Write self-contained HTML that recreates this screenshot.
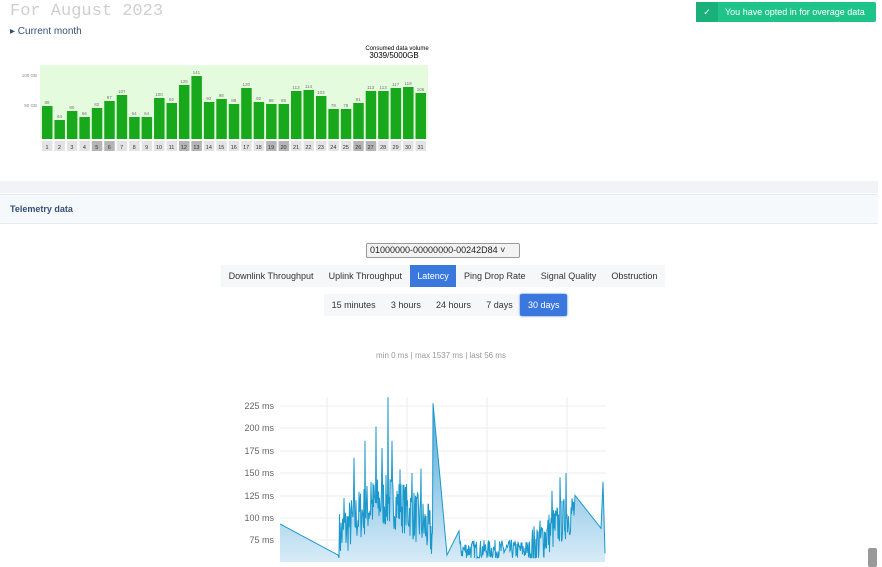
<!DOCTYPE html>
<html><head><meta charset="utf-8"><style>
body{margin:0;width:882px;height:567px;overflow:hidden;background:#fff;font-family:"Liberation Sans",sans-serif;position:relative}
.t{position:absolute;left:10px;top:2px;font-family:"Liberation Mono",monospace;font-size:17px;color:#cfcfcf}
.cm{position:absolute;left:10px;top:26px;font-size:10px;color:#35507a}
.toast{position:absolute;left:696px;top:2px;width:180px;height:20px;background:#1fc48a;border-radius:2px;color:#fff;font-size:9px;line-height:20px}
.toast .ic{position:absolute;left:0;top:0;width:22px;height:20px;background:#19b07b;text-align:center}
.toast span{position:absolute;left:29px}
.band{position:absolute;left:0;top:181px;width:878px;height:12px;background:#f1f3f6}
.hdr{position:absolute;left:0;top:194px;width:878px;height:28px;background:#f6f9fc;border-top:1px solid #e6e9ee;border-bottom:1px solid #e6e9ee;font-size:9px;font-weight:bold;color:#35507a;line-height:28px;text-indent:10px}
.sel{position:absolute;left:366px;top:243px;width:152px;height:13px;border:1px solid #999;background:#f3f3f3;font-size:9px;line-height:13px;text-indent:3px;color:#222;border-radius:2px}
.tabs{position:absolute;top:265px;height:22px;background:#f6f7f9;font-size:9px;color:#333;display:flex}
.tabs div{padding:0 7.6px;line-height:22px}
.tabs .a{background:#3b78dd;color:#fff}
.stat{position:absolute;left:0;width:882px;top:351px;text-align:center;font-size:8px;color:#999}
.sb{position:absolute;left:868px;top:548px;width:9px;height:19px;background:#999;border-radius:2px}
</style></head><body>
<div class="t">For August 2023</div>
<div class="cm">&#9656; Current month</div>
<div class="toast"><div class="ic">&#10003;</div><span>You have opted in for overage data</span></div>
<svg width="882" height="160" style="position:absolute;left:0;top:0" id="bars" font-family="Liberation Sans,sans-serif">
<text x="397" y="50" font-size="6" text-anchor="middle">Consumed data volume</text>
<text x="394" y="58" font-size="8" text-anchor="middle">3039/5000GB</text>
<rect x="40" y="65" width="388" height="74" fill="#e4fbde"/>
<text x="37" y="77" font-size="4.5" fill="#888" text-anchor="end">100 GB</text>
<text x="37" y="107" font-size="4.5" fill="#888" text-anchor="end">50 GB</text>
</svg>
<div class="band"></div>
<div class="hdr">Telemetry data</div>
<div class="sel">01000000-00000000-00242D84 &#709;</div>
<div class="tabs" style="left:221px"><div>Downlink Throughput</div><div>Uplink Throughput</div><div class="a">Latency</div><div>Ping Drop Rate</div><div>Signal Quality</div><div>Obstruction</div></div>
<div class="tabs" style="left:324px;top:294px;height:22px"><div>15 minutes</div><div>3 hours</div><div>24 hours</div><div>7 days</div><div class="a" style="border-radius:2px;box-shadow:0 0 2px #3b78dd">30 days</div></div>
<div class="stat">min 0 ms | max 1537 ms | last 56 ms</div>
<svg width="882" height="567" style="position:absolute;left:0;top:0" id="lc" font-family="Liberation Sans,sans-serif">
<defs><linearGradient id="g" x1="0" y1="0" x2="0" y2="1"><stop offset="0" stop-color="#4aa6d8"/><stop offset="1" stop-color="#d7ebf7"/></linearGradient></defs>
<g stroke="#eee" stroke-width="1"><line x1="327" y1="397" x2="327" y2="562"/><line x1="407" y1="397" x2="407" y2="562"/><line x1="487" y1="397" x2="487" y2="562"/><line x1="567" y1="397" x2="567" y2="562"/>
<line x1="280" y1="406" x2="606" y2="406"/><line x1="280" y1="428" x2="606" y2="428"/><line x1="280" y1="451" x2="606" y2="451"/><line x1="280" y1="473" x2="606" y2="473"/><line x1="280" y1="496" x2="606" y2="496"/><line x1="280" y1="518" x2="606" y2="518"/><line x1="280" y1="540" x2="606" y2="540"/></g>
<g font-size="9" fill="#666" text-anchor="end"><text x="274" y="409">225 ms</text><text x="274" y="431">200 ms</text><text x="274" y="454">175 ms</text><text x="274" y="476">150 ms</text><text x="274" y="499">125 ms</text><text x="274" y="521">100 ms</text><text x="274" y="543">75 ms</text></g>
<path id="ar" fill="url(#g)"/><path id="ln" fill="none" stroke="#1a98cc" stroke-width="1"/>
</svg>
<div class="sb"></div>
<script>
var v=[88,64,80,66,82,97,107,64,64,100,92,125,141,92,98,88,120,92,88,88,113,114,103,78,78,91,113,113,117,119,106];
var tops=[106,120,111,117,108,101,95,117,117,98,103,85,76,102,99,104,88,102,104,104,91,90,96,109,109,103,91,91,88,87,93];
var s='',b=139,sv=document.getElementById('bars');
var dark=[5,6,12,13,19,20,26,27];
for(var i=0;i<31;i++){var x=42+i*12.45,h=b-tops[i];
s+='<rect x="'+x+'" y="'+(b-h)+'" width="10.5" height="'+h+'" fill="#17a81b"/>';
s+='<text x="'+(x+5)+'" y="'+(b-h-2)+'" font-size="4.5" fill="#777" text-anchor="middle">'+v[i]+'</text>';
s+='<rect x="'+x+'" y="141" width="10.5" height="10" fill="'+(dark.indexOf(i+1)>=0?'#b5b5b5':'#e3e3e3')+'"/>';
s+='<text x="'+(x+5)+'" y="149" font-size="5.5" fill="#333" text-anchor="middle">'+(i+1)+'</text>';}
sv.insertAdjacentHTML('beforeend',s);
var seed=7;function r(){seed=(seed*16807)%2147483647;return seed/2147483647;}
function Y(v){return 406+(225-v)*0.893;}
var pts=[[280,93],[338,58]];
var spikes={344:122,354:167,365:186,376:202,388:235,392:186,400:154,412:150,421:155,433:228,382:178,371:140,405:130,575:125,560:145,566:150,552:130};
for(var x=339;x<=433;x+=0.5){var base=75+40*Math.sin((x-339)/95*Math.PI);var val=spikes[x]||base+(r()-0.45)*60;pts.push([x,Math.max(55,val)]);}
pts.push([440,145],[447,58],[459,85]);
for(var x=460;x<=575;x+=0.5){var base=x<530?64:64+(x-530)*1.0;var val=spikes[x]||base+(r()-0.5)*(x<530?22:50);pts.push([x,Math.max(55,val)]);}
pts.push([601,88],[603,140],[604,100],[605,60]);
var d='M'+pts.map(function(p){return p[0]+','+Y(p[1]).toFixed(1)}).join('L');
document.getElementById('ln').setAttribute('d',d);
document.getElementById('ar').setAttribute('d',d+'L605,562L280,562Z');
</script>
</body></html>
